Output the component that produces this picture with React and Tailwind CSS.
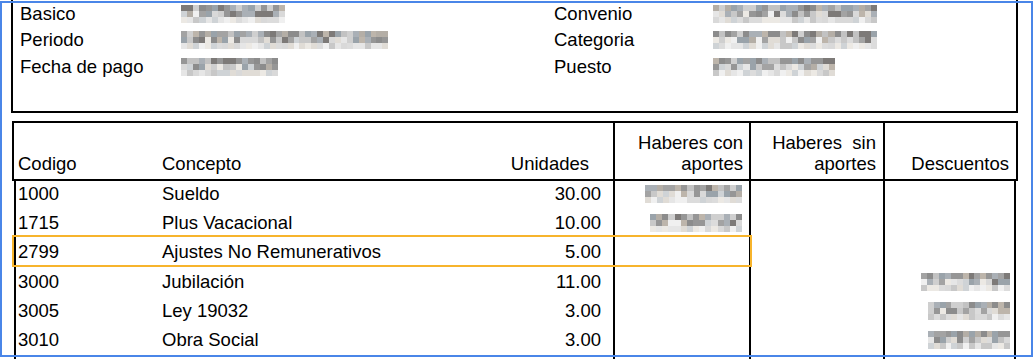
import React from 'react';

const DARK = ['#8c8c8c', '#a3a3a3', '#b4aea6', '#9aa3aa', '#7d7a78', '#c2c2c2', '#aab0b6', '#bdb5ab', '#969696', '#cfcfcf'];
const LIGHT = ['#d9d9d9', '#e6e6e6', '#cfd3d6', '#ece9e4', '#dcdcdc', '#f0f0f0', '#c8c8c8', '#e0dcd6'];

// pixelated placeholder for the blurred values
function Mosaic({ w, seed = 1 }) {
  const cols = Math.max(1, Math.round(w / 6));
  let s = (seed * 7919) % 233280;
  const rnd = () => {
    s = (s * 9301 + 49297) % 233280;
    return s / 233280;
  };
  const rows = [DARK, [...DARK, ...LIGHT], LIGHT];
  return (
    <span className="inline-flex flex-col" style={{ width: w }}>
      {rows.map((pal, r) => (
        <span key={r} className="flex h-[6px]">
          {Array.from({ length: cols }, (_, c) => (
            <span key={c} className="h-[6px] flex-1" style={{ background: pal[Math.floor(rnd() * pal.length)] }} />
          ))}
        </span>
      ))}
    </span>
  );
}

const info = [
  { l: 'Basico', lw: 104, r: 'Convenio', rw: 164 },
  { l: 'Periodo', lw: 207, r: 'Categoria', rw: 164 },
  { l: 'Fecha de pago', lw: 97, r: 'Puesto', rw: 122 },
];

const rows = [
  { code: '1000', name: 'Sueldo', units: '30.00', con: 97 },
  { code: '1715', name: 'Plus Vacacional', units: '10.00', con: 92 },
  { code: '2799', name: 'Ajustes No Remunerativos', units: '5.00' },
  { code: '3000', name: 'Jubilación', units: '11.00', desc: 89 },
  { code: '3005', name: 'Ley 19032', units: '3.00', desc: 82 },
  { code: '3010', name: 'Obra Social', units: '3.00', desc: 82 },
  { code: '', name: '', units: '' },
];

export default function App() {
  return (
    <div className="relative h-[359px] w-[1035px] overflow-hidden bg-white text-[18.5px] text-black font-['Liberation_Sans',Arial,sans-serif]">
      <div className="pl-[11px] pr-[17px]">
        {/* Employee info */}
        <div className="flex h-[113px] flex-col border-x-2 border-b-2 border-black pl-[7px] pt-[1px]">
          {info.map((row, i) => (
            <div key={row.l} className="grid h-[26.3px] shrink-0 grid-cols-[161px_373px_159px_1fr] items-center leading-[26px]">
              <span>{row.l}</span>
              <span className="flex"><Mosaic w={row.lw} seed={i + 3} /></span>
              <span>{row.r}</span>
              <span className="flex"><Mosaic w={row.rw} seed={i + 11} /></span>
            </div>
          ))}
        </div>

        {/* Table header */}
        <div className="mt-[8px] ml-[1px] grid h-[60px] grid-cols-[144px_270px_185px_136px_134px_1fr] border-2 border-black leading-[21px]">
          <div className="flex flex-col justify-end pb-[5px] pl-[4px]">Codigo</div>
          <div className="flex flex-col justify-end pb-[5px] pl-[4px]">Concepto</div>
          <div className="flex flex-col justify-end pb-[5px] pr-[24px] text-right">Unidades</div>
          <div className="flex flex-col justify-end border-l-2 border-black pb-[5px] pr-[6px] text-right">
            <span>Haberes con</span>
            <span>aportes</span>
          </div>
          <div className="flex flex-col justify-end border-l-2 border-black pb-[5px] pr-[7px] text-right">
            <span className="whitespace-pre">Haberes  sin</span>
            <span>aportes</span>
          </div>
          <div className="flex flex-col justify-end border-l-2 border-black pb-[5px] pr-[7px] text-right">Descuentos</div>
        </div>

        {/* Table body */}
        <div className="ml-[3px] mr-[2px] border-x-2 border-black">
          {rows.map((r, i) => (
            <div key={i} className="grid h-[29.2px] grid-cols-[142px_270px_185px_136px_134px_1fr] leading-[26px]">
              <div className="pl-[2px]">{r.code}</div>
              <div className="pl-[4px]">{r.name}</div>
              <div className="pr-[12px] text-right">{r.units}</div>
              <div className="flex items-start justify-end border-l-2 border-black pt-[4px] pr-[7px]">
                {r.con && <Mosaic w={r.con} seed={i + 21} />}
              </div>
              <div className="border-l-2 border-black" />
              <div className="flex items-start justify-end border-l-2 border-black pt-[4px] pr-[4px]">
                {r.desc && <Mosaic w={r.desc} seed={i + 31} />}
              </div>
            </div>
          ))}
        </div>
      </div>

      {/* selected row highlight */}
      <div className="pointer-events-none absolute left-[12px] top-[235px] h-[32px] w-[740px] border-2 border-[#f7b42c]" />
      {/* selection frame */}
      <div className="pointer-events-none absolute left-0 top-[1px] h-[356px] w-[1033px] border-2 border-[#4a86e8]" />
    </div>
  );
}
